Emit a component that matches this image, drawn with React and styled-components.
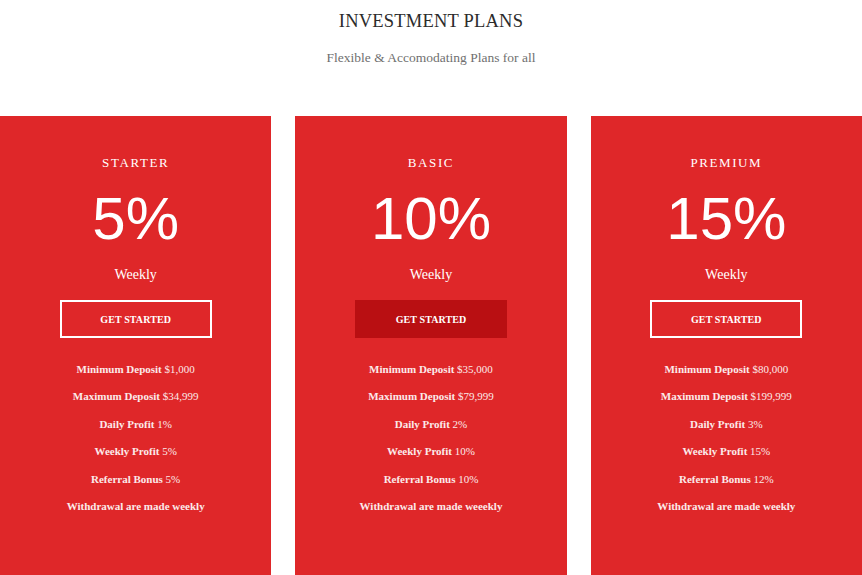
import React from "react";
import styled, { createGlobalStyle } from "styled-components";

const GlobalStyle = createGlobalStyle`
  html, body {
    margin: 0;
    padding: 0;
    background: #ffffff;
  }
  body {
    font-family: "Liberation Serif", "DejaVu Serif", serif;
  }
`;

const Section = styled.section`
  width: 862px;
  height: 575px;
  overflow: hidden;
  display: flex;
  flex-direction: column;
  align-items: center;
`;

const Title = styled.h2`
  margin: 9px 0 0;
  font-family: "Liberation Serif", serif;
  font-weight: 400;
  font-size: 18.5px;
  line-height: 24px;
  letter-spacing: 0.2px;
  color: #2b2b2b;
`;

const Subtitle = styled.p`
  margin: 16px 0 0;
  font-family: "Liberation Serif", serif;
  font-size: 13.5px;
  line-height: 18px;
  color: #6f6f6f;
`;

const CardRow = styled.div`
  width: 100%;
  margin-top: 49px;
  display: grid;
  grid-template-columns: repeat(3, 1fr);
  column-gap: 24px;
  flex: 1;
`;

const Card = styled.div`
  background: #df2729;
  display: flex;
  flex-direction: column;
  align-items: center;
  padding-top: 39px;
  color: #ffffff;
`;

const PlanName = styled.div`
  font-size: 13px;
  line-height: 16px;
  letter-spacing: 1.6px;
  font-weight: 400;
`;

const Rate = styled.div`
  margin-top: 14px;
  font-family: "Liberation Sans", Arial, sans-serif;
  font-size: 60px;
  line-height: 68px;
`;

const Period = styled.div`
  margin-top: 13px;
  font-size: 14px;
  line-height: 18px;
`;

const StartButton = styled.button`
  margin-top: 16px;
  width: 152px;
  height: 38px;
  box-sizing: border-box;
  background: ${(props) => (props.$filled ? "#b90f12" : "transparent")};
  border: 2px solid ${(props) => (props.$filled ? "#b90f12" : "#ffffff")};
  color: #ffffff;
  font-family: "Liberation Serif", serif;
  font-weight: 700;
  font-size: 10px;
  letter-spacing: 0.1px;
  cursor: pointer;
`;

const FeatureList = styled.ul`
  list-style: none;
  margin: 23px 0 0;
  padding: 0;
  display: flex;
  flex-direction: column;
  align-items: center;
  gap: 11.4px;
`;

const Feature = styled.li`
  font-size: 11px;
  line-height: 16px;
  font-weight: 700;
  color: #fbeaea;

  span {
    font-weight: 400;
  }
`;

const plans = [
  {
    name: "STARTER",
    rate: "5%",
    filled: false,
    features: [
      ["Minimum Deposit", "$1,000"],
      ["Maximum Deposit", "$34,999"],
      ["Daily Profit", "1%"],
      ["Weekly Profit", "5%"],
      ["Referral Bonus", "5%"],
      ["Withdrawal are made weekly", ""],
    ],
  },
  {
    name: "BASIC",
    rate: "10%",
    filled: true,
    features: [
      ["Minimum Deposit", "$35,000"],
      ["Maximum Deposit", "$79,999"],
      ["Daily Profit", "2%"],
      ["Weekly Profit", "10%"],
      ["Referral Bonus", "10%"],
      ["Withdrawal are made weeekly", ""],
    ],
  },
  {
    name: "PREMIUM",
    rate: "15%",
    filled: false,
    features: [
      ["Minimum Deposit", "$80,000"],
      ["Maximum Deposit", "$199,999"],
      ["Daily Profit", "3%"],
      ["Weekly Profit", "15%"],
      ["Referral Bonus", "12%"],
      ["Withdrawal are made weekly", ""],
    ],
  },
];

const App = () => {
  return (
    <>
      <GlobalStyle />
      <Section>
        <Title>INVESTMENT PLANS</Title>
        <Subtitle>Flexible &amp; Accomodating Plans for all</Subtitle>
        <CardRow>
          {plans.map((plan) => (
            <Card key={plan.name}>
              <PlanName>{plan.name}</PlanName>
              <Rate>{plan.rate}</Rate>
              <Period>Weekly</Period>
              <StartButton $filled={plan.filled}>GET STARTED</StartButton>
              <FeatureList>
                {plan.features.map(([label, value]) => (
                  <Feature key={label}>
                    {label}
                    {value && <span> {value}</span>}
                  </Feature>
                ))}
              </FeatureList>
            </Card>
          ))}
        </CardRow>
      </Section>
    </>
  );
};

export default App;
